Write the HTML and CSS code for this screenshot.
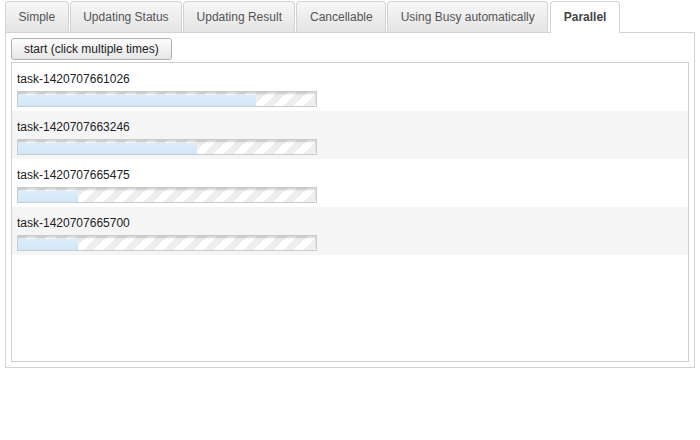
FILE: index.html
```html
<!DOCTYPE html>
<html>
<head>
<meta charset="utf-8">
<link rel="stylesheet" href="styles.css">
</head>
<body>
<div class="tabs">
  <ul class="tab-list">
    <li class="tab">Simple</li>
    <li class="tab">Updating Status</li>
    <li class="tab">Updating Result</li>
    <li class="tab">Cancellable</li>
    <li class="tab">Using Busy automatically</li>
    <li class="tab active">Parallel</li>
  </ul>
  <div class="panel">
    <button class="btn">start (click multiple times)</button>
    <div class="task-box">
      <div class="task">
        <div class="task-name">task-1420707661026</div>
        <div class="bar"><div class="fill" style="width:80%"></div></div>
      </div>
      <div class="task">
        <div class="task-name">task-1420707663246</div>
        <div class="bar"><div class="fill" style="width:60%"></div></div>
      </div>
      <div class="task">
        <div class="task-name">task-1420707665475</div>
        <div class="bar"><div class="fill" style="width:20%"></div></div>
      </div>
      <div class="task">
        <div class="task-name">task-1420707665700</div>
        <div class="bar"><div class="fill" style="width:20%"></div></div>
      </div>
    </div>
  </div>
</div>
</body>
</html>
```
FILE: styles.css
```css
html, body {
  margin: 0;
  padding: 0;
  background: #fff;
}
body {
  padding: 0 5px;
  font-family: "Liberation Sans", Arial, sans-serif;
  font-size: 12px;
  color: #222;
}
.tabs {
  width: 690px;
}
.tab-list {
  list-style: none;
  margin: 0;
  padding: 1px 0 0 0;
  display: flex;
  align-items: flex-end;
  position: relative;
  z-index: 1;
}
.tab {
  margin-right: 1px;
  padding: 8px 12.5px 7px;
  line-height: 15px;
  border: 1px solid #d3d3d3;
  border-bottom: none;
  border-radius: 4px 4px 0 0;
  background: linear-gradient(#f7f7f7, #e4e4e4);
  color: #555;
}
.tab.active {
  margin-left: 1px;
  background: #fff;
  color: #444;
  font-weight: bold;
  padding-bottom: 8px;
  margin-bottom: -1px;
}
.panel {
  border: 1px solid #d3d3d3;
  padding: 5px;
  height: 336px;
  box-sizing: border-box;
}
.btn {
  display: block;
  height: 22px;
  padding: 0 12px;
  margin: 0 0 2px 0;
  font-family: "Liberation Sans", Arial, sans-serif;
  font-size: 12px;
  color: #222;
  border: 1px solid #b0b0b0;
  border-radius: 3px;
  background: linear-gradient(#fdfdfd, #e6e6e6);
}
.task-box {
  border: 1px solid #d0d0d0;
  height: 300px;
  box-sizing: border-box;
}
.task {
  padding: 9px 5px 4px;
  height: 48px;
  box-sizing: border-box;
}
.task:nth-child(even) {
  background: #f5f5f5;
}
.task-name {
  line-height: 15px;
  margin-bottom: 4px;
  color: #222;
}
.bar {
  width: 300px;
  height: 16px;
  box-sizing: border-box;
  border: 1px solid #cbcbcb;
  padding-top: 3px;
  background-color: #fff;
  background-image: linear-gradient(135deg, #eeeeee 25%, transparent 25%, transparent 50%, #eeeeee 50%, #eeeeee 75%, transparent 75%, transparent);
  background-size: 20px 20px;
  box-shadow: inset 0 2px 2px rgba(0, 0, 0, 0.16);
}
.fill {
  height: 100%;
  background: linear-gradient(#dcedf9, #cfe7f7);
}
```
